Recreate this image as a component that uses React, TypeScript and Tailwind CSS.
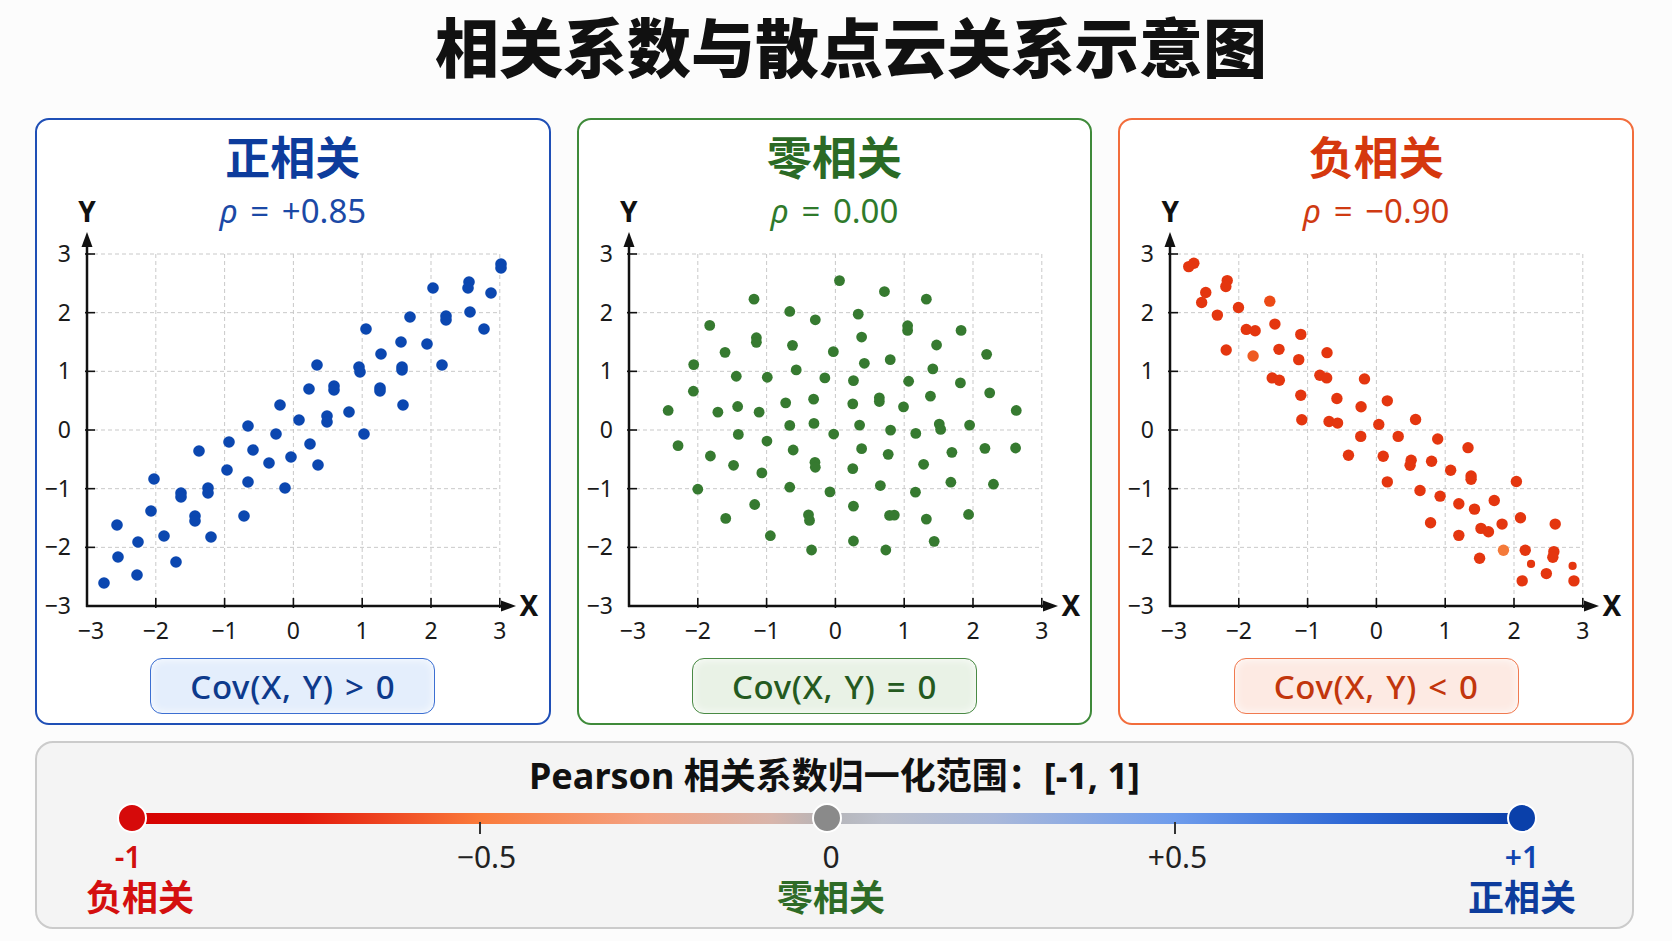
import React from "react";

type Pt = [number, number];
type RawPt = [number, number, string?];

// chart geometry (px inside the card)
const X0 = 52;
const Y0 = 23;
const UX = 68.8;
const UY = 58.67;
const AXIS_Y = Y0 + 6 * UY;
const STEPS = [-3, -2, -1, 0, 1, 2, 3];

const BLUE_DOTS: Pt[] = [
    [466, 33], [466, 37], [434, 51], [433, 57], [456, 62], [398, 57], [435, 81], [411, 85],
    [411, 89], [375, 86], [449, 98], [331, 98], [366, 111], [392, 113], [346, 123], [282, 134],
    [324, 136], [325, 141], [367, 136], [367, 139], [407, 134], [274, 158], [299, 155], [299, 159],
    [345, 157], [345, 160], [368, 174], [245, 174], [314, 181], [264, 189], [292, 185], [292, 191],
    [213, 195], [194, 211], [241, 203], [329, 203], [164, 220], [218, 219], [275, 213], [256, 226],
    [234, 232], [283, 234], [192, 239], [213, 251], [119, 248], [250, 257], [146, 262], [146, 266],
    [173, 257], [173, 262], [116, 280], [160, 285], [160, 290], [209, 285], [82, 294], [129, 305],
    [176, 306], [103, 311], [83, 326], [141, 331], [102, 344], [69, 352]
];

// sampled on a 3x grid (axis at x=25 / x=20, top line y=40), scaled below
const GREEN_RAW: RawPt[] = [
    [643, 120], [775, 153], [898, 176], [392, 176], [497, 213], [572, 238], [698, 221], [262, 255],
    [843, 256], [843, 270], [1000, 270], [399, 292], [399, 306], [708, 290], [505, 315], [928, 314],
    [307, 336], [625, 334], [1075, 342], [792, 358], [716, 369], [215, 373], [516, 389], [917, 386],
    [340, 408], [431, 411], [600, 413], [684, 421], [846, 423], [998, 428], [214, 453], [1084, 458],
    [910, 468], [567, 477], [760, 473], [760, 484], [485, 488], [682, 491], [831, 500], [140, 511],
    [344, 499], [286, 516], [407, 516], [1162, 511], [497, 556], [568, 550], [702, 555], [936, 552],
    [940, 568], [1025, 555], [793, 570], [346, 583], [626, 582], [867, 580], [169, 617], [430, 603],
    [507, 630], [708, 626], [1070, 625], [1160, 624], [786, 643], [973, 637], [264, 648], [332, 676],
    [571, 667], [572, 682], [682, 686], [890, 673], [415, 699], [227, 748], [497, 742], [615, 756],
    [763, 737], [866, 757], [970, 727], [1095, 733], [394, 794], [684, 799], [309, 836], [552, 825],
    [555, 842], [790, 827], [804, 826], [898, 838], [1022, 824], [440, 888], [684, 904], [921, 905],
    [561, 931], [779, 931]
];

const RED_RAW: RawPt[] = [
    [75, 78], [90, 68], [188, 120], [184, 138], [125, 156], [113, 186], [313, 182, "#ec4a16"], [221, 201],
    [159, 224], [328, 251], [244, 267], [270, 271], [404, 282], [185, 329], [264, 347, "#ee5a22"], [340, 327],
    [481, 337], [398, 358], [320, 413], [341, 420], [460, 405], [480, 413], [591, 416], [404, 465],
    [510, 475], [581, 500], [658, 482], [407, 539], [487, 544], [512, 549], [633, 553], [741, 538],
    [580, 589], [690, 589], [806, 597], [895, 623], [544, 646], [646, 649], [728, 661], [725, 676],
    [788, 664], [844, 691], [904, 708], [904, 718], [658, 726], [1037, 725], [754, 752], [813, 769],
    [868, 792], [972, 782], [914, 808], [1049, 834], [785, 849], [995, 853], [1151, 853], [933, 866],
    [955, 876], [868, 887], [999, 932, "#f47a3a"], [1063, 932], [1147, 936], [1144, 953], [929, 956],
    [1080, 973, "s"], [1202, 979, "s"], [1125, 1002], [1054, 1024], [1206, 1024]
];

type Dot = { x: number; y: number; r: number; fill?: string };

function fromRaw(raw: RawPt[], axis: number, r: number): Dot[] {
    return raw.map(([zx, zy, tag]) => ({
        x: X0 + (zx - axis) * 0.3406,
        y: Y0 + (zy - 40) * 0.3322,
        r: tag === "s" ? r - 1.6 : r,
        fill: tag && tag !== "s" ? tag : undefined
    }));
}

const fmt = (n: number) => (n < 0 ? "\u2212" + Math.abs(n) : String(n));

function Chart({ dots, color }: { dots: Dot[]; color: string }) {
    return (
        <svg width={512} height={422} viewBox="2 0 512 422" className="block overflow-visible">
            {STEPS.map((t, i) =>
                i > 0 ? (
                    <line
                        key={"v" + t}
                        x1={X0 + i * UX}
                        y1={Y0}
                        x2={X0 + i * UX}
                        y2={AXIS_Y}
                        stroke="#c9c9c9"
                        strokeWidth={1}
                        strokeDasharray="4 3"
                    />
                ) : null
            )}
            {STEPS.map((t, i) =>
                i < 6 ? (
                    <line
                        key={"h" + t}
                        x1={X0}
                        y1={Y0 + i * UY}
                        x2={X0 + 6 * UX}
                        y2={Y0 + i * UY}
                        stroke="#c9c9c9"
                        strokeWidth={1}
                        strokeDasharray="4 3"
                    />
                ) : null
            )}

            {dots.map((d, i) => (
                <circle key={i} cx={d.x} cy={d.y} r={d.r} fill={d.fill || color} />
            ))}

            {/* axes */}
            <line x1={X0} y1={AXIS_Y + 1} x2={X0} y2={12} stroke="#111" strokeWidth={2.5} />
            <polygon points={`${X0},1 ${X0 - 5.5},16 ${X0 + 5.5},16`} fill="#111" />
            <line x1={X0 - 1} y1={AXIS_Y} x2={470} y2={AXIS_Y} stroke="#111" strokeWidth={2.5} />
            <polygon points={`481,${AXIS_Y} 466,${AXIS_Y - 5.5} 466,${AXIS_Y + 5.5}`} fill="#111" />

            {STEPS.map((t, i) =>
                i > 0 ? (
                    <line
                        key={"tx" + t}
                        x1={X0 + i * UX}
                        y1={AXIS_Y - 8}
                        x2={X0 + i * UX}
                        y2={AXIS_Y + 2}
                        stroke="#111"
                        strokeWidth={1.6}
                    />
                ) : null
            )}
            {STEPS.map((t, i) =>
                i < 6 ? (
                    <line
                        key={"ty" + t}
                        x1={X0 - 2}
                        y1={Y0 + i * UY}
                        x2={X0 + 8}
                        y2={Y0 + i * UY}
                        stroke="#111"
                        strokeWidth={1.6}
                    />
                ) : null
            )}

            {STEPS.map((t, i) => (
                <text
                    key={"ly" + t}
                    x={36}
                    y={Y0 + i * UY + 8}
                    textAnchor="end"
                    fontSize={23}
                    fill="#1a1a1a"
                >
                    {fmt(3 - i)}
                </text>
            ))}
            {STEPS.map((t, i) => (
                <text
                    key={"lx" + t}
                    x={X0 + i * UX + (i === 0 ? 4 : 0)}
                    y={408}
                    textAnchor="middle"
                    fontSize={23}
                    fill="#1a1a1a"
                >
                    {fmt(t)}
                </text>
            ))}
            <text x={494} y={AXIS_Y + 10} textAnchor="middle" fontSize={28} fontWeight={700} fill="#111">
                X
            </text>
        </svg>
    );
}

type CardSpec = {
    name: string;
    rho: string;
    cov: string;
    color: string;
    dots: Dot[];
    borderClass: string;
    titleClass: string;
    rhoClass: string;
    covClass: string;
};

const CARDS: CardSpec[] = [
    {
        name: "正相关",
        rho: "+0.85",
        cov: "Cov(X, Y) > 0",
        color: "#0b47b0",
        dots: BLUE_DOTS.map(([x, y]) => ({ x, y, r: 5.8 })),
        borderClass: "border-[#1f4fb6]",
        titleClass: "text-[#0d3c9c]",
        rhoClass: "text-[#1b49a6]",
        covClass: "border-[#3c6fd2] bg-[#e4eefc] text-[#0d3a8c]"
    },
    {
        name: "零相关",
        rho: "0.00",
        cov: "Cov(X, Y) = 0",
        color: "#367a30",
        dots: fromRaw(GREEN_RAW, 25, 5.4),
        borderClass: "border-[#3f8a3a]",
        titleClass: "text-[#2b6a25]",
        rhoClass: "text-[#2f7a2b]",
        covClass: "border-[#4a8a45] bg-[#e9f2e6] text-[#245a1f]"
    },
    {
        name: "负相关",
        rho: "\u22120.90",
        cov: "Cov(X, Y) < 0",
        color: "#e4360f",
        dots: fromRaw(RED_RAW, 20, 5.7),
        borderClass: "border-[#f26d3c]",
        titleClass: "text-[#d5380e]",
        rhoClass: "text-[#cf3a12]",
        covClass: "border-[#f07a50] bg-[#fdeae3] text-[#c2360c]"
    }
];

function ScatterCard({ card }: { card: CardSpec }) {
    return (
        <div
            className={`flex h-[607px] flex-col items-center rounded-[14px] border-2 bg-white ${card.borderClass}`}
        >
            <div className={`pt-[15px] text-[45px] font-bold leading-none ${card.titleClass}`}>
                {card.name}
            </div>
            <div className="mt-[14px] grid w-full grid-cols-[100px_1fr_100px] items-center">
                <span className="justify-self-center text-[28px] font-bold leading-none text-[#111]">Y</span>
                <span className={`justify-self-center text-[33px] leading-none [word-spacing:4px] ${card.rhoClass}`}>
                    <i>ρ</i> = {card.rho}
                </span>
                <span />
            </div>
            <div className="mt-[4px]">
                <Chart dots={card.dots} color={card.color} />
            </div>
            <div
                className={`mt-[5px] flex h-[56px] w-[285px] items-center justify-center rounded-[12px] border-[1.5px] text-[33px] font-medium leading-none tracking-[0.02em] shadow-[inset_0_0_10px_rgba(255,255,255,0.9)] [word-spacing:2px] ${card.covClass}`}
            >
                {card.cov}
            </div>
        </div>
    );
}

function ScaleLabel({ children, className }: { children: React.ReactNode; className: string }) {
    return (
        <div className="flex w-0 justify-center">
            <span className={`whitespace-nowrap leading-none ${className}`}>{children}</span>
        </div>
    );
}

function PearsonScale() {
    return (
        <div className="mt-[16px] ml-[35px] flex h-[188px] w-[1599px] flex-col rounded-[18px] border-2 border-[#cbcbcb] bg-[#f4f4f4]">
            <div className="pt-[15px] text-center text-[36px] font-bold leading-none text-[#111]">
                Pearson 相关系数归一化范围：[-1, 1]
            </div>

            <div className="ml-[95px] mr-[110px] mt-[10px]">
                <div className="relative flex h-[28px] items-center">
                    <div className="h-[11px] w-full bg-[linear-gradient(90deg,#d40000_0%,#e3160a_12%,#fa7a3a_25%,#f4a282_37%,#d8b5ab_46%,#b4b4b8_50%,#bcc0cc_54%,#a9b8da_62%,#6e9cec_75%,#2c66d4_88%,#0a3ea8_100%)]" />
                    <div className="absolute left-1/4 top-[18px] h-[12px] w-[2px] -translate-x-1/2 bg-[#333]" />
                    <div className="absolute left-3/4 top-[18px] h-[12px] w-[2px] -translate-x-1/2 bg-[#333]" />
                    <div className="absolute left-0 top-1/2 h-[30px] w-[30px] -translate-x-1/2 -translate-y-1/2 rounded-full border-2 border-white bg-[#d60a0a]" />
                    <div className="absolute left-1/2 top-1/2 h-[30px] w-[30px] -translate-x-1/2 -translate-y-1/2 rounded-full border-2 border-white bg-[#8a8a8a]" />
                    <div className="absolute left-full top-1/2 h-[30px] w-[30px] -translate-x-1/2 -translate-y-1/2 rounded-full border-2 border-white bg-[#0a40aa]" />
                </div>

                <div className="mt-[10px] flex justify-between text-[30px]">
                    <ScaleLabel className="-translate-x-[4px] font-semibold text-[#d10f0f]">-1</ScaleLabel>
                    <ScaleLabel className="translate-x-[7px] text-[#222]">{"\u22120.5"}</ScaleLabel>
                    <ScaleLabel className="translate-x-[4px] text-[#222]">0</ScaleLabel>
                    <ScaleLabel className="translate-x-[3px] text-[#222]">+0.5</ScaleLabel>
                    <ScaleLabel className="font-semibold text-[#0f45b0]">+1</ScaleLabel>
                </div>

                <div className="mt-[8px] flex justify-between text-[36px] font-bold">
                    <ScaleLabel className="translate-x-[8px] text-[#d40f0f]">负相关</ScaleLabel>
                    <ScaleLabel className="translate-x-[4px] text-[#2e6b26]">零相关</ScaleLabel>
                    <ScaleLabel className="text-[#0d3c9c]">正相关</ScaleLabel>
                </div>
            </div>
        </div>
    );
}

export default function App() {
    return (
        <div className="h-[941px] w-[1672px] overflow-hidden bg-[#fcfcfc] font-['Noto_Sans','Noto_Sans_CJK_SC',sans-serif]">
            <h1 className="pl-[30px] pt-[16px] text-center text-[64px] font-black leading-none text-[#111]">
                相关系数与散点云关系示意图
            </h1>

            <div className="ml-[35px] mt-[38px] grid w-[1599px] grid-cols-3 gap-[26px]">
                {CARDS.map((card) => (
                    <ScatterCard key={card.name} card={card} />
                ))}
            </div>

            <PearsonScale />
        </div>
    );
}
